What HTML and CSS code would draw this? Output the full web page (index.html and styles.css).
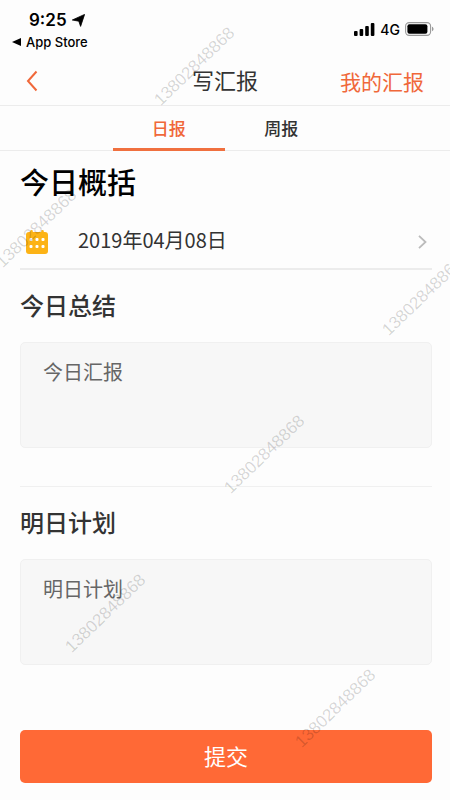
FILE: index.html
```html
<!DOCTYPE html>
<html lang="zh-CN">
<head>
<meta charset="utf-8">
<meta name="viewport" content="width=device-width, initial-scale=1">
<title>写汇报</title>
<link rel="stylesheet" href="styles.css">
</head>
<body>
<div class="app">
  <div class="status">
    <div class="status-left">
      <div class="clock"><span>9:25</span>
        <svg width="13" height="13" viewBox="0 0 13 13" aria-hidden="true"><path d="M12.6.4 8.600 12.400 6.800 7.200.3 6z" stroke="#000" stroke-width=".8" stroke-linejoin="round"/></svg>
      </div>
      <a class="return" href="#">
        <svg width="9" height="8" viewBox="0 0 9 8" aria-hidden="true"><path d="M0 4 9 0v8z"/></svg>
        <span>App Store</span>
      </a>
    </div>
    <div class="status-right">
      <svg width="21" height="13" viewBox="0 0 21 13" aria-hidden="true"><rect x="0" y="8" width="3.600" height="5" rx="1"/><rect x="5.6" y="6" width="3.600" height="7" rx="1"/><rect x="11.2" y="3" width="3.600" height="10" rx="1"/><rect x="16.8" y="0" width="3.600" height="13" rx="1"/></svg>
      <span>4G</span>
      <svg width="29" height="14" viewBox="0 0 29 14" aria-hidden="true"><rect x=".6" y=".6" width="25" height="12.8" rx="3.6" fill="none" stroke="#999" stroke-width="1.1"/><rect x="2.4" y="2.3" width="20" height="9.4" rx="2"/><path d="M27 4.8c2 .7 2 3.700 0 4.400z" fill="#999"/></svg>
    </div>
  </div>

  <header class="nav">
    <button class="back" type="button" aria-label="返回">
      <svg width="12" height="22" viewBox="0 0 12 22" aria-hidden="true"><path d="M10.500 1.500 2 11l8.500 9.500" fill="none" stroke="currentColor" stroke-width="2"/></svg>
    </button>
    <h1 class="nav-title">写汇报</h1>
    <a class="mine" href="#">我的汇报</a>
  </header>

  <nav class="tabs">
    <a class="tab active" href="#" aria-current="page">日报</a>
    <a class="tab" href="#">周报</a>
  </nav>

  <form class="report">
    <h2 class="heading">今日概括</h2>
    <button class="date" type="button">
      <svg width="22" height="24" viewBox="0 0 22 24" aria-hidden="true"><rect x="0" y="2" width="22" height="22" rx="3" fill="#fcb316"/><path d="M5.500 1.300v4M16.500 1.300v4" stroke="#fcb316" stroke-width="2.600" stroke-linecap="round"/><g fill="#fff"><rect x="3.500" y="8" width="3" height="3" rx="1"/><rect x="9.500" y="8" width="3" height="3" rx="1"/><rect x="15.500" y="8" width="3" height="3" rx="1"/><rect x="3.500" y="15" width="3" height="3" rx="1"/><rect x="9.500" y="15" width="3" height="3" rx="1"/><rect x="15.500" y="15" width="3" height="3" rx="1"/></g></svg>
      <span class="date-text">2019年04月08日</span>
      <svg width="9" height="14" viewBox="0 0 9 14" aria-hidden="true"><path d="M1 .8 7.500 7 1 13.200" fill="none" stroke="#bbb" stroke-width="1.800"/></svg>
    </button>
    <section class="field">
      <label class="label" for="summary">今日总结</label>
      <textarea class="box" id="summary" placeholder="今日汇报"></textarea>
    </section>
    <section class="field divided">
      <label class="label" for="plan">明日计划</label>
      <textarea class="box" id="plan" placeholder="明日计划"></textarea>
    </section>
    <button class="submit" type="submit">提交</button>
  </form>

  <svg class="watermark" aria-hidden="true">
    <text transform="translate(194 66) rotate(-44)" dy="6">13802848868</text>
    <text transform="translate(36 228) rotate(-44)" dy="6">13802848868</text>
    <text transform="translate(422 296) rotate(-44)" dy="6">13802848868</text>
    <text transform="translate(264 454) rotate(-44)" dy="6">13802848868</text>
    <text transform="translate(105 613) rotate(-44)" dy="6">13802848868</text>
    <text transform="translate(335 708) rotate(-44)" dy="6">13802848868</text>
  </svg>
</div>
</body>
</html>
```

FILE: styles.css
```css
* {
  box-sizing: border-box;
}

body {
  margin: 0;
  background: #fdfdfd;
  color: #333;
  font-family: "Liberation Sans", "Noto Sans CJK SC", sans-serif;
}

a {
  color: inherit;
  text-decoration: none;
}

button {
  padding: 0;
  border: 0;
  background: none;
  color: inherit;
  font: inherit;
  cursor: pointer;
}

.app {
  position: relative;
  min-height: 100vh;
  overflow: hidden;
}

.status {
  display: flex;
  justify-content: space-between;
  height: 56px;
  padding: 10px 16px 0 12px;
  color: #000;
  font-family: Inter, sans-serif;
}

.clock {
  display: flex;
  align-items: center;
  gap: 5px;
  padding-left: 17px;
  font-size: 17px;
  font-weight: 600;
  line-height: 20px;
}

.return {
  display: flex;
  align-items: center;
  gap: 5px;
  margin-top: 4px;
  font-size: 13px;
  font-weight: 500;
  line-height: 16px;
}

.status-right {
  display: flex;
  align-items: center;
  gap: 5px;
  height: 38px;
  font-size: 14px;
  font-weight: 500;
}

.nav {
  display: grid;
  grid-template-columns: 1fr auto 1fr;
  align-items: center;
  height: 50px;
  padding: 0 26px;
  border-bottom: 1px solid #ececec;
}

.back {
  display: flex;
  justify-self: start;
  color: #f0683a;
}

.nav-title {
  margin: 0;
  padding-bottom: 4px;
  font-size: 22px;
  font-weight: 400;
}

.mine {
  justify-self: end;
  color: #f0683a;
  font-size: 21px;
}

.tabs {
  display: flex;
  justify-content: center;
  height: 45px;
  border-bottom: 1px solid #ececec;
}

.tab {
  flex: 0 0 25%;
  height: 45px;
  border-bottom: 3px solid transparent;
  font-size: 17px;
  font-weight: 500;
  line-height: 47px;
  text-align: center;
}

.tab.active {
  border-color: #f0703f;
  color: #f0683a;
}

.report {
  padding: 0 18px 18px 20px;
}

.heading {
  margin: 0;
  padding-top: 12px;
  color: #000;
  font-size: 29px;
  font-weight: 500;
  line-height: 42px;
}

.date {
  display: flex;
  align-items: center;
  width: 100%;
  height: 65px;
  padding: 10px 5px 0 6px;
  border-bottom: 2px solid #ececec;
}

.date-text {
  flex: 1;
  margin-left: 30px;
  padding-bottom: 4px;
  font-family: "Noto Sans CJK SC", sans-serif;
  font-size: 20px;
  line-height: 28px;
  text-align: left;
}

.field {
  padding: 19px 0 38px;
}

.divided {
  border-top: 1px solid #f0f0f0;
}

.label {
  display: block;
  font-size: 24px;
  font-weight: 500;
  line-height: 36px;
}

.box {
  display: block;
  width: 100%;
  height: 106px;
  margin-top: 17px;
  padding: 15px 22px;
  border: 1px solid #f0f0f0;
  border-radius: 5px;
  background: #f7f7f7;
  color: #333;
  font-family: inherit;
  font-size: 20px;
  line-height: 30px;
  resize: none;
}

.box::placeholder {
  color: #666;
  opacity: 1;
}

.submit {
  display: block;
  width: 100%;
  height: 53px;
  margin-top: 27px;
  padding-bottom: 4px;
  border-radius: 5px;
  background: #ff6936;
  color: #fff;
  font-size: 22px;
}

.watermark {
  position: absolute;
  inset: 0;
  width: 100%;
  height: 100%;
  fill: #000;
  fill-opacity: 0.16;
  font-size: 17px;
  text-anchor: middle;
  pointer-events: none;
}
```
